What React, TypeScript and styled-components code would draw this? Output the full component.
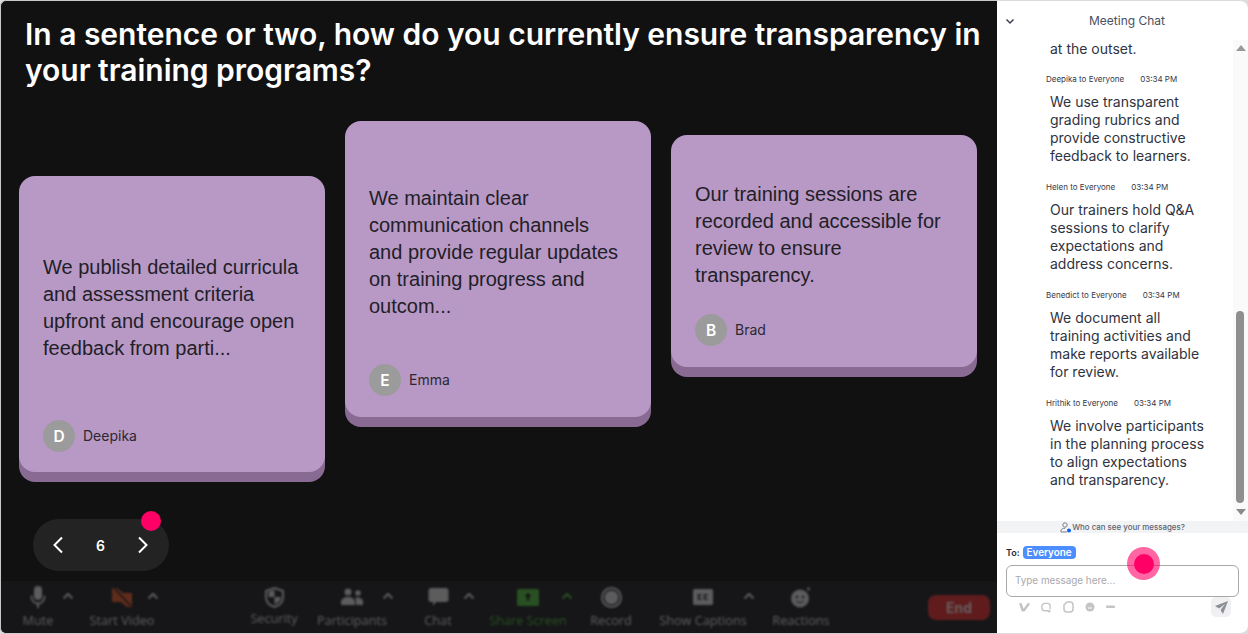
import React from "react";
import styled, { createGlobalStyle } from "styled-components";

const Global = createGlobalStyle`
  html, body { margin: 0; padding: 0; background: #ffffff; }
  body { font-family: Inter, "Liberation Sans", sans-serif; }
  * { box-sizing: border-box; }
`;

const Page = styled.div`
  width: 1248px;
  height: 634px;
  display: flex;
  overflow: hidden;
  background: #dcdcdc;
`;
const Stage = styled.main`
  width: 997px;
  height: 634px;
  display: flex;
  flex-direction: column;
  background: #111112;
  border-left: 1px solid #c8c8c8;
  border-top: 1px solid #c8c8c8;
  border-bottom: 1px solid #d0d0d0;
  border-radius: 6px 0 0 6px;
  position: relative;
`;
const Question = styled.h1`
  margin: 0;
  padding: 15px 0 0 24px;
  height: 119px;
  color: #ffffff;
  font-size: 30px;
  line-height: 36px;
  font-weight: 600;
  letter-spacing: -0.02px;
  font-family: Inter, sans-serif;
`;
const Board = styled.section`
  display: flex;
  gap: 20px;
  padding-left: 18px;
  height: 399px;
  align-items: flex-start;
`;
const Card = styled.article<{ $top: number; $h: number; $pad: number }>`
  width: 306px;
  height: ${(p) => p.$h}px;
  margin-top: ${(p) => p.$top}px;
  background: #b899c6;
  border-radius: 16px;
  box-shadow: 0 10px 0 #886a92;
  padding: ${(p) => p.$pad}px 24px 0;
  display: flex;
  flex-direction: column;
`;
const CardText = styled.p`
  margin: 0;
  color: #222026;
  font-family: "Liberation Sans", Arial, sans-serif;
  font-size: 20px;
  line-height: 26.9px;
  font-weight: 400;
  flex: 1;
`;
const Author = styled.div<{ $bottom: number }>`
  display: flex;
  align-items: center;
  gap: 8px;
  height: 32px;
  margin-bottom: ${(p) => p.$bottom}px;
  color: #2b2830;
  font-size: 14px;
`;
const AuthorName = styled.span`
  position: relative;
  top: -1px;
`;
const Avatar = styled.span`
  width: 32px;
  height: 32px;
  border-radius: 50%;
  background: #9b9b9b;
  color: #fff;
  font-weight: 600;
  font-size: 15.5px;
  display: flex;
  align-items: center;
  justify-content: center;
`;
const Pager = styled.nav`
  width: 136px;
  height: 52px;
  margin: 0 0 10px 32px;
  border-radius: 26px;
  background: #232323;
  display: flex;
  align-items: center;
  justify-content: space-between;
  padding: 0 18px 0 17px;
  color: #fff;
  font-size: 14px;
  font-weight: 600;
  position: relative;
`;
const Dot = styled.span`
  position: absolute;
  left: 108px;
  top: -8px;
  width: 20px;
  height: 20px;
  border-radius: 50%;
  background: #ff0066;
`;
const Bar = styled.footer`
  height: 52px;
  background: #161618;
  border-bottom-left-radius: 6px;
  overflow: hidden;
`;
const BarInner = styled.div`
  height: 52px;
  filter: blur(1.1px);
  opacity: 0.34;
  display: flex;
  align-items: flex-start;
  padding-top: 2px;
`;
const Tool = styled.div<{ $w: number; $color?: string; $gap?: number }>`
  width: ${(p) => p.$w}px;
  flex: none;
  display: flex;
  flex-direction: column;
  align-items: center;
  white-space: nowrap;
  gap: ${(p) => p.$gap ?? 2}px;
  color: ${(p) => p.$color ?? "#e4e4e4"};
  font-size: 12.7px;
  line-height: 14px;
  font-family: "Open Sans", sans-serif;
  svg { display: block; }
`;
const IconSlot = styled.div`
  height: 28px;
  display: flex;
  align-items: center;
  justify-content: center;
`;
const Caret = styled.div<{ $color?: string }>`
  flex: none;
  width: 14px;
  height: 26px;
  display: flex;
  align-items: center;
  justify-content: center;
  color: ${(p) => p.$color ?? "#e4e4e4"};
`;
const Space = styled.div<{ $w: number }>`
  flex: none;
  width: ${(p) => p.$w}px;
`;
const EndBtn = styled.div`
  flex: none;
  width: 62px;
  height: 25px;
  margin-top: 12px;
  border-radius: 8px;
  background: #f02a2a;
  color: #fff;
  font-size: 14px;
  font-weight: 600;
  display: flex;
  align-items: center;
  justify-content: center;
`;

const Chat = styled.aside`
  width: 251px;
  height: 634px;
  background: #fff;
  border-top: 1px solid #dcdcdc;
  border-bottom: 1px solid #dcdcdc;
  border-top-right-radius: 8px;
  border-bottom-right-radius: 8px;
  display: flex;
  flex-direction: column;
`;
const ChatHead = styled.header`
  height: 39px;
  flex: none;
  display: flex;
  align-items: center;
  justify-content: center;
  padding-left: 9px;
  color: #4a5060;
  font-size: 12px;
  position: relative;
`;
const Chev = styled.span`
  position: absolute;
  left: 8px;
  top: 15px;
  display: flex;
`;
const ChatBody = styled.div`
  height: 481px;
  flex: none;
  display: flex;
`;
const Messages = styled.div`
  flex: 1;
  overflow: hidden;
  padding-left: 53px;
  padding-right: 26px;
`;
const Track = styled.div`
  width: 15px;
  flex: none;
  background: #fafafa;
  position: relative;
  display: flex;
  flex-direction: column;
  align-items: center;
  justify-content: space-between;
  padding: 5px 0 6px;
`;
const Thumb = styled.div`
  position: absolute;
  left: 3px;
  top: 271px;
  width: 8px;
  height: 192px;
  border-radius: 4px;
  background: #8f8f8f;
`;
const Bubble = styled.p<{ $after: number }>`
  margin: 0 0 ${(p) => p.$after}px;
  color: #2f3341;
  font-size: 14px;
  line-height: 18px;
`;
const Meta = styled.div`
  display: flex;
  gap: 16px;
  margin-left: -4px;
  height: 12px;
  margin-bottom: 7.6px;
  color: #33384a;
  font-size: 8px;
  line-height: 12px;
`;
const WhoBar = styled.div`
  height: 12px;
  flex: none;
  background: #f2f3f5;
  display: flex;
  align-items: center;
  justify-content: center;
  color: #5d6270;
  font-size: 7.9px;
  font-weight: 500;
`;
const Compose = styled.div`
  flex: 1;
  padding: 13px 9px 0;
  position: relative;
`;
const ToRow = styled.div`
  display: flex;
  align-items: center;
  gap: 3px;
  color: #232a38;
  font-size: 9px;
  font-weight: 600;
  height: 13px;
`;
const Chip = styled.span`
  background: #4c8dff;
  color: #fff;
  border-radius: 4px;
  padding: 0 4px;
  line-height: 13px;
  font-size: 9.9px;
  font-weight: 600;
`;
const InputBox = styled.div`
  width: 233px;
  height: 32px;
  margin-top: 6px;
  border: 1px solid #a8a8a8;
  border-radius: 6px;
  padding: 0 8px 2px;
  display: flex;
  align-items: center;
  color: #a8a8ac;
  font-size: 9.9px;
`;
const IconRow = styled.div`
  display: flex;
  align-items: center;
  height: 20px;
  gap: 11px;
  padding-left: 13px;
  color: #c4c4c6;
  width: 225px;
`;
const SendBtn = styled.span`
  margin-left: auto;
  width: 20px;
  height: 20px;
  border-radius: 5px;
  background: #f0f0f2;
  display: flex;
  align-items: center;
  justify-content: center;
  color: #8b8f96;
`;
const Pulse = styled.span`
  position: absolute;
  left: 130px;
  top: 14px;
  width: 33px;
  height: 33px;
  border-radius: 50%;
  background: rgba(255, 0, 102, 0.6);
  display: flex;
  align-items: center;
  justify-content: center;
  &::after {
    content: "";
    width: 20px;
    height: 20px;
    border-radius: 50%;
    background: #ff0066;
  }
`;

const cards = [
  { top: 56, h: 296, pad: 78, bottom: 20, text: "We publish detailed curricula and assessment criteria upfront and encourage open feedback from parti...", name: "Deepika", i: "D" },
  { top: 1, h: 296, pad: 64, bottom: 21, text: "We maintain clear communication channels and provide regular updates on training progress and outcom...", name: "Emma", i: "E" },
  { top: 15, h: 232, pad: 46, bottom: 21, text: "Our training sessions are recorded and accessible for review to ensure transparency.", name: "Brad", i: "B" },
];

const msgs = [
  { who: "Deepika to Everyone", text: "We use transparent grading rubrics and provide constructive feedback to learners." },
  { who: "Helen to Everyone", text: "Our trainers hold Q&A sessions to clarify expectations and address concerns." },
  { who: "Benedict to Everyone", text: "We document all training activities and make reports available for review." },
  { who: "Hrithik to Everyone", text: "We involve participants in the planning process to align expectations and transparency." },
];

const Up = () => (
  <svg width="12" height="8" viewBox="0 0 12 8" fill="none" stroke="currentColor" strokeWidth="2"><path d="M1.5 6.5 6 2l4.5 4.5" /></svg>
);

export default function App() {
  return (
    <Page>
      <Global />
      <Stage>
        <Question>In a sentence or two, how do you currently ensure transparency in your training programs?</Question>
        <Board>
          {cards.map((c) => (
            <Card key={c.name} $top={c.top} $h={c.h} $pad={c.pad}>
              <CardText>{c.text}</CardText>
              <Author $bottom={c.bottom}>
                <Avatar>{c.i}</Avatar>
                <AuthorName>{c.name}</AuthorName>
              </Author>
            </Card>
          ))}
        </Board>
        <Pager>
          <svg width="16" height="18" viewBox="0 0 16 18" fill="none" stroke="#fff" strokeWidth="2"><path d="M12 1.5 4.5 9 12 16.5" /></svg>
          6
          <svg width="16" height="18" viewBox="0 0 16 18" fill="none" stroke="#fff" strokeWidth="2"><path d="M4 1.5 11.5 9 4 16.5" /></svg>
          <Dot />
        </Pager>
        <Bar>
          <BarInner>
            <Space $w={18} />
            <Tool $w={38}>
              <IconSlot>
                <svg width="16" height="24" viewBox="0 0 16 24" fill="currentColor"><rect x="4" y="1" width="8" height="14" rx="4" /><path d="M1.5 10.5v1.5a6.500 6.500 0 0 0 13 0v-1.500" fill="none" stroke="currentColor" strokeWidth="1.800" /><rect x="7" y="18" width="2" height="5" /></svg>
              </IconSlot>
              Mute
            </Tool>
            <Space $w={4} />
            <Caret><Up /></Caret>
            <Space $w={23} />
            <Tool $w={48}>
              <IconSlot>
                <svg width="20" height="19" viewBox="0 0 20 19" fill="#f05a28"><path d="M0 5V0l5 0 6 5h9v14h-5L9 14H0z" /><path d="M2 0 19 18" stroke="#161618" strokeWidth="1.500" /></svg>
              </IconSlot>
              Start Video
            </Tool>
            <Caret><Up /></Caret>
            <Space $w={89} />
            <Tool $w={50} $gap={0}>
              <IconSlot>
                <svg width="19" height="21" viewBox="0 0 19 21"><path d="M9.500 1 18 4v6c0 5-3.600 8.500-8.500 10C4.600 18.500 1 15 1 10V4z" fill="none" stroke="currentColor" strokeWidth="2" /><path d="M9.500 3v7H3.500V5zM9.500 10H16c-.4 3.500-3 6-6.500 7.500z" fill="currentColor" /></svg>
              </IconSlot>
              Security
            </Tool>
            <Space $w={28} />
            <Tool $w={50}>
              <IconSlot>
                <svg width="22" height="18" viewBox="0 0 22 18" fill="currentColor"><circle cx="7" cy="4" r="3.500" /><circle cx="17" cy="5" r="2.800" /><path d="M0 17v-3c0-3 3-5 7-5s7 2 7 5v3zM15 17v-4c0-1.500-.5-2.500-1-3.200 3.500-.8 8 .8 8 3.500V17z" /></svg>
              </IconSlot>
              Participants
            </Tool>
            <Space $w={4} />
            <Caret><Up /></Caret>
            <Space $w={23} />
            <Tool $w={40}>
              <IconSlot>
                <svg width="21" height="20" viewBox="0 0 21 20" fill="currentColor"><path d="M3 1h15a2.500 2.500 0 0 1 2.500 2.500v9A2.500 2.500 0 0 1 18 15H8l-3 4v-4H3a2.500 2.500 0 0 1-2.500-2.500v-9A2.500 2.500 0 0 1 3 1z" /></svg>
              </IconSlot>
              Chat
            </Tool>
            <Space $w={4} />
            <Caret><Up /></Caret>
            <Space $w={22} />
            <Tool $w={60} $color="#4fc23a">
              <IconSlot>
                <svg width="22" height="17" viewBox="0 0 22 17"><rect width="22" height="17" rx="1.500" fill="#4fc23a" /><path d="M11 3.500 7.500 8H10v4h2V8h2.500z" fill="#111" /></svg>
              </IconSlot>
              Share Screen
            </Tool>
            <Space $w={2} />
            <Caret $color="#4fc23a"><Up /></Caret>
            <Space $w={17} />
            <Tool $w={40}>
              <IconSlot>
                <svg width="21" height="21" viewBox="0 0 21 21"><circle cx="10.500" cy="10.500" r="9.500" fill="none" stroke="currentColor" strokeWidth="2" /><circle cx="10.500" cy="10.500" r="7" fill="currentColor" /></svg>
              </IconSlot>
              Record
            </Tool>
            <Space $w={37} />
            <Tool $w={70}>
              <IconSlot>
                <svg width="20" height="16" viewBox="0 0 20 16"><rect width="20" height="16" rx="1.500" fill="currentColor" /><path d="M8.500 6H5.500v4h3M14.500 6h-3v4h3" fill="none" stroke="#161618" strokeWidth="1.400" /></svg>
              </IconSlot>
              Show Captions
            </Tool>
            <Space $w={4} />
            <Caret><Up /></Caret>
            <Space $w={20} />
            <Tool $w={50}>
              <IconSlot>
                <svg width="20" height="21" viewBox="0 0 20 21"><circle cx="9" cy="11.500" r="9" fill="currentColor" /><circle cx="6" cy="10" r="1.200" fill="#161618" /><circle cx="12" cy="10" r="1.200" fill="#161618" /><path d="M5.500 14c1.500 2 5.500 2 7 0" fill="none" stroke="#161618" strokeWidth="1.200" /><path d="M17.500 0v4M15.500 2h4" stroke="currentColor" /></svg>
              </IconSlot>
              Reactions
            </Tool>
            <Space $w={102} />
            <EndBtn>End</EndBtn>
          </BarInner>
        </Bar>
      </Stage>
      <Chat>
        <ChatHead>
          <Chev>
            <svg width="10" height="10" viewBox="0 0 10 10" fill="none" stroke="#3d4250" strokeWidth="1.500"><path d="M1.500 3.500 5 7l3.500-3.500" /></svg>
          </Chev>
          Meeting Chat
        </ChatHead>
        <ChatBody>
          <Messages>
            <Bubble $after={15}>at the outset.</Bubble>
            {msgs.map((m) => (
              <React.Fragment key={m.who}>
                <Meta>
                  <span>{m.who}</span>
                  <span>03:34 PM</span>
                </Meta>
                <Bubble $after={16.4}>{m.text}</Bubble>
              </React.Fragment>
            ))}
          </Messages>
          <Track>
            <svg width="10" height="6" viewBox="0 0 10 6"><path d="M5 0l5 6H0z" fill="#9a9a9a" /></svg>
            <Thumb />
            <svg width="10" height="6" viewBox="0 0 10 6"><path d="M5 6l5-6H0z" fill="#8a8a8a" /></svg>
          </Track>
        </ChatBody>
        <WhoBar>
          <svg width="12" height="11" viewBox="0 0 12 11"><circle cx="5" cy="3" r="2.200" fill="none" stroke="#7a7e88" /><path d="M1 10V8.500C1 7 3 6.300 5 6.300M1 10h6" fill="none" stroke="#7a7e88" /><circle cx="9" cy="8.500" r="2" fill="#0e63e8" /></svg>
          Who can see your messages?
        </WhoBar>
        <Compose>
          <ToRow>
            To:
            <Chip>Everyone</Chip>
          </ToRow>
          <InputBox>Type message here...</InputBox>
          <IconRow>
            <svg width="11" height="10" viewBox="0 0 12 10" fill="currentColor"><path d="M0 1l3 0 2 6 5-7 2 2-6 8H3z" /></svg>
            <svg width="11" height="11" viewBox="0 0 12 11" fill="none" stroke="currentColor" strokeWidth="1.500"><path d="M8 9H4a3 3 0 0 1-3-3V4a3 3 0 0 1 3-3h3a3 3 0 0 1 3 3v3" /><path d="M9 8v3M7.500 9.500h3" /></svg>
            <svg width="11" height="12" viewBox="0 0 11 12" fill="none" stroke="currentColor" strokeWidth="1.500"><path d="M1 4l3-3h3a3 3 0 0 1 3 3v4a3 3 0 0 1-3 3H4a3 3 0 0 1-3-3z" /></svg>
            <svg width="10" height="10" viewBox="0 0 10 10"><circle cx="5" cy="5" r="4.500" fill="currentColor" /><path d="M3 6h4" stroke="#fff" /></svg>
            <svg width="9" height="4" viewBox="0 0 9 4"><rect y="0.500" width="9" height="2.500" rx="1" fill="currentColor" /></svg>
            <SendBtn>
              <svg width="13" height="13" viewBox="0 0 13 13" fill="currentColor"><path d="M13 0 0 5l4 2.500L10 3 5.500 9 8 13z" /></svg>
            </SendBtn>
          </IconRow>
          <Pulse />
        </Compose>
      </Chat>
    </Page>
  );
}
